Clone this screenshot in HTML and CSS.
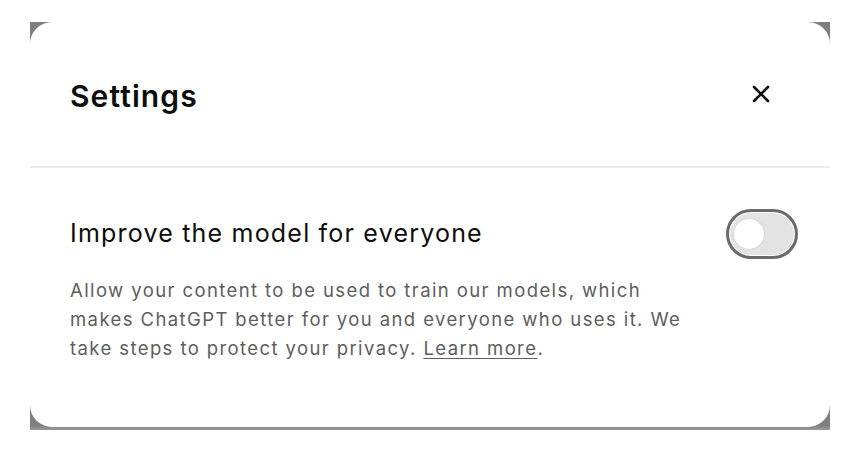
FILE: index.html
```html
<!DOCTYPE html>
<html lang="en">
<head>
<meta charset="utf-8">
<title>Settings</title>
<link rel="stylesheet" href="styles.css">
</head>
<body>
  <div class="backdrop">
    <div class="card" role="dialog" aria-label="Settings">
      <div class="header">
        <h2 class="title">Settings</h2>
        <button class="close" aria-label="Close">
          <svg width="18" height="18" viewBox="0 0 18 18" aria-hidden="true">
            <path d="M2 2 L16 16 M16 2 L2 16" fill="none" stroke="#0d0d0d" stroke-width="2.6" stroke-linecap="round"/>
          </svg>
        </button>
      </div>
      <div class="divider"></div>
      <div class="section">
        <div class="row">
          <span class="label">Improve the model for everyone</span>
          <button class="toggle" role="switch" aria-checked="false" aria-label="Improve the model for everyone">
            <span class="track"><span class="knob"></span></span>
          </button>
        </div>
        <p class="desc">Allow your content to be used to train our models, which makes ChatGPT better for you and everyone who uses it. We take steps to protect your privacy. <a class="link" href="#">Learn more</a>.</p>
      </div>
    </div>
  </div>
</body>
</html>
```

FILE: styles.css
```css
html, body {
  margin: 0;
  padding: 0;
  background: #ffffff;
}

body {
  padding: 22px 0 0 30px;
  font-family: Inter, "Noto Sans", "Liberation Sans", sans-serif;
  color: #0d0d0d;
}

.backdrop {
  width: 800px;
  height: 408px;
  background: linear-gradient(#7f7f7f, #7f7f7f 404px, #8a8a8a 405px, #9a9a9a 408px);
}

.card {
  height: 405px;
  background: #ffffff;
  border-radius: 22px;
  overflow: hidden;
}

.header {
  height: 144px;
  display: flex;
  align-items: center;
  justify-content: space-between;
  padding: 0 60px 0 40px;
}

.title {
  margin: 0;
  padding-top: 3px;
  font-size: 30px;
  font-weight: 600;
  letter-spacing: 1.1px;
  color: #0d0d0d;
}

.close {
  display: flex;
  padding: 0;
  border: 0;
  background: none;
}

.divider {
  height: 2px;
  background: #ededed;
}

.section {
  padding: 41px 32px 0 40px;
}

.row {
  display: flex;
  align-items: center;
  justify-content: space-between;
}

.label {
  font-size: 25px;
  font-weight: 400;
  letter-spacing: 1.2px;
  color: #0d0d0d;
  margin-top: -2px;
}

.toggle {
  box-sizing: border-box;
  width: 72px;
  height: 50px;
  padding: 1px;
  border: 3px solid #6a6a6a;
  border-radius: 25px;
  background: #ffffff;
  display: flex;
}

.track {
  flex: 1;
  display: flex;
  align-items: center;
  padding: 0 4px;
  border-radius: 21px;
  background: #e3e3e3;
}

.knob {
  width: 30px;
  height: 30px;
  border-radius: 50%;
  background: #ffffff;
  box-shadow: 0 0 2px rgba(0, 0, 0, 0.15);
}

.desc {
  margin: 17px 0 0;
  max-width: 628px;
  font-size: 18.5px;
  line-height: 29px;
  letter-spacing: 1.4px;
  color: #5d5d5d;
}

.link {
  color: #5d5d5d;
  text-decoration: underline;
  text-underline-offset: 3px;
}
```
